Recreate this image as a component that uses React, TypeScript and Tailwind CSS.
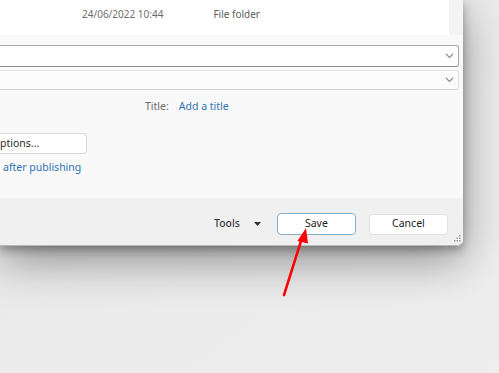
import React from "react";

export default function App() {
  const font = { fontFamily: '"Noto Sans", "Open Sans", sans-serif' };
  return (
    <div
      className="relative w-[499px] h-[373px] overflow-hidden bg-gradient-to-br from-[#e6e6e6] via-[#ebebeb] to-[#eeeeee]"
      style={font}
    >
      {/* Dialog */}
      <div className="relative w-[463px] h-[246px] bg-[#f9f9f9] flex flex-col shadow-[0_14px_45px_rgba(0,0,0,0.4),0_4px_10px_rgba(0,0,0,0.3)] rounded-br-[6px]">
        {/* File list strip */}
        <div className="flex h-[35px]">
          <div className="w-[449px] bg-white flex items-start pt-[7px] text-[10px]">
            <span className="ml-[82px] text-[#6e6e6e]">24/06/2022 10:44</span>
            <span className="ml-[50px] text-[#5e5e5e]">File folder</span>
          </div>
          <div className="flex-1 bg-[#f4f4f4]" />
        </div>

        {/* Inputs */}
        <div className="mt-[10px] w-[459px] h-[22px] bg-white border border-l-0 border-[#a9a9a9] border-b-[#8f8f8f] rounded-r-[3px] flex items-center justify-end pr-[4px]">
          <Chevron />
        </div>
        <div className="mt-[3px] w-[459px] h-[20px] bg-[#fcfcfc] border border-l-0 border-[#e0e0e0] border-b-[#d2d2d2] rounded-r-[3px] flex items-center justify-end pr-[4px]">
          <Chevron />
        </div>

        {/* Title row */}
        <div className="mt-[10px] h-[14px] flex items-center text-[10.5px]">
          <span className="ml-[145px] text-[#6a6a6a]">Title:</span>
          <span className="ml-[10px] text-[#2f74b5]">Add a title</span>
        </div>

        {/* Options button */}
        <div className="mt-[19px] w-[87px] h-[21px] bg-white border border-l-0 border-[#d9d9d9] rounded-r-[4px] flex items-center text-[10.5px] text-[#2b2b2b]">
          ptions...
        </div>
        <div className="mt-[6px] ml-[3px] text-[10.5px] text-[#2f74b5] leading-[14px]">
          after publishing
        </div>

        {/* Footer */}
        <div className="mt-auto h-[48px] bg-[#f0f0f0] rounded-br-[6px] border-b border-[#b8b8b8] flex items-center pt-[5px]">
          <span className="ml-[214px] text-[10.5px] text-[#3a3a3a] font-medium">Tools</span>
          <svg className="ml-[14px]" width="7" height="4" viewBox="0 0 7 4">
            <path d="M0 0 H7 L3.5 4 Z" fill="#333" />
          </svg>
          <div className="ml-[16px] w-[79px] h-[22px] bg-white border-[1.5px] border-[#86aecb] rounded-[4px] flex items-center justify-center text-[10.5px] text-[#222]">
            Save
          </div>
          <div className="ml-[13px] w-[79px] h-[21px] bg-white border border-[#e2e2e2] rounded-[4px] flex items-center justify-center text-[10.5px] text-[#222]">
            Cancel
          </div>
          <svg className="ml-[6px] self-end mb-[3px]" width="7" height="7" viewBox="0 0 7 7">
            <rect x="5" y="0" width="1.5" height="1.5" fill="#9a9a9a" />
            <rect x="2.5" y="2.5" width="1.5" height="1.5" fill="#9a9a9a" />
            <rect x="5" y="2.5" width="1.5" height="1.5" fill="#9a9a9a" />
            <rect x="0" y="5" width="1.5" height="1.5" fill="#9a9a9a" />
            <rect x="2.5" y="5" width="1.5" height="1.5" fill="#9a9a9a" />
            <rect x="5" y="5" width="1.5" height="1.5" fill="#9a9a9a" />
          </svg>
        </div>
      </div>

      {/* Red arrow annotation */}
      <svg className="absolute left-0 top-0 pointer-events-none" width="499" height="373">
        <line x1="284" y1="295" x2="301" y2="241" stroke="#ff0000" strokeWidth="2.5" strokeLinecap="round" />
        <polygon points="306,228 297.5,241 308,243.5" fill="#ff0000" />
      </svg>
    </div>
  );
}

function Chevron() {
  return (
    <svg width="9" height="6" viewBox="0 0 9 6">
      <path d="M1 1 L4.5 4.5 L8 1" fill="none" stroke="#8a8a8a" strokeWidth="1.1" />
    </svg>
  );
}
